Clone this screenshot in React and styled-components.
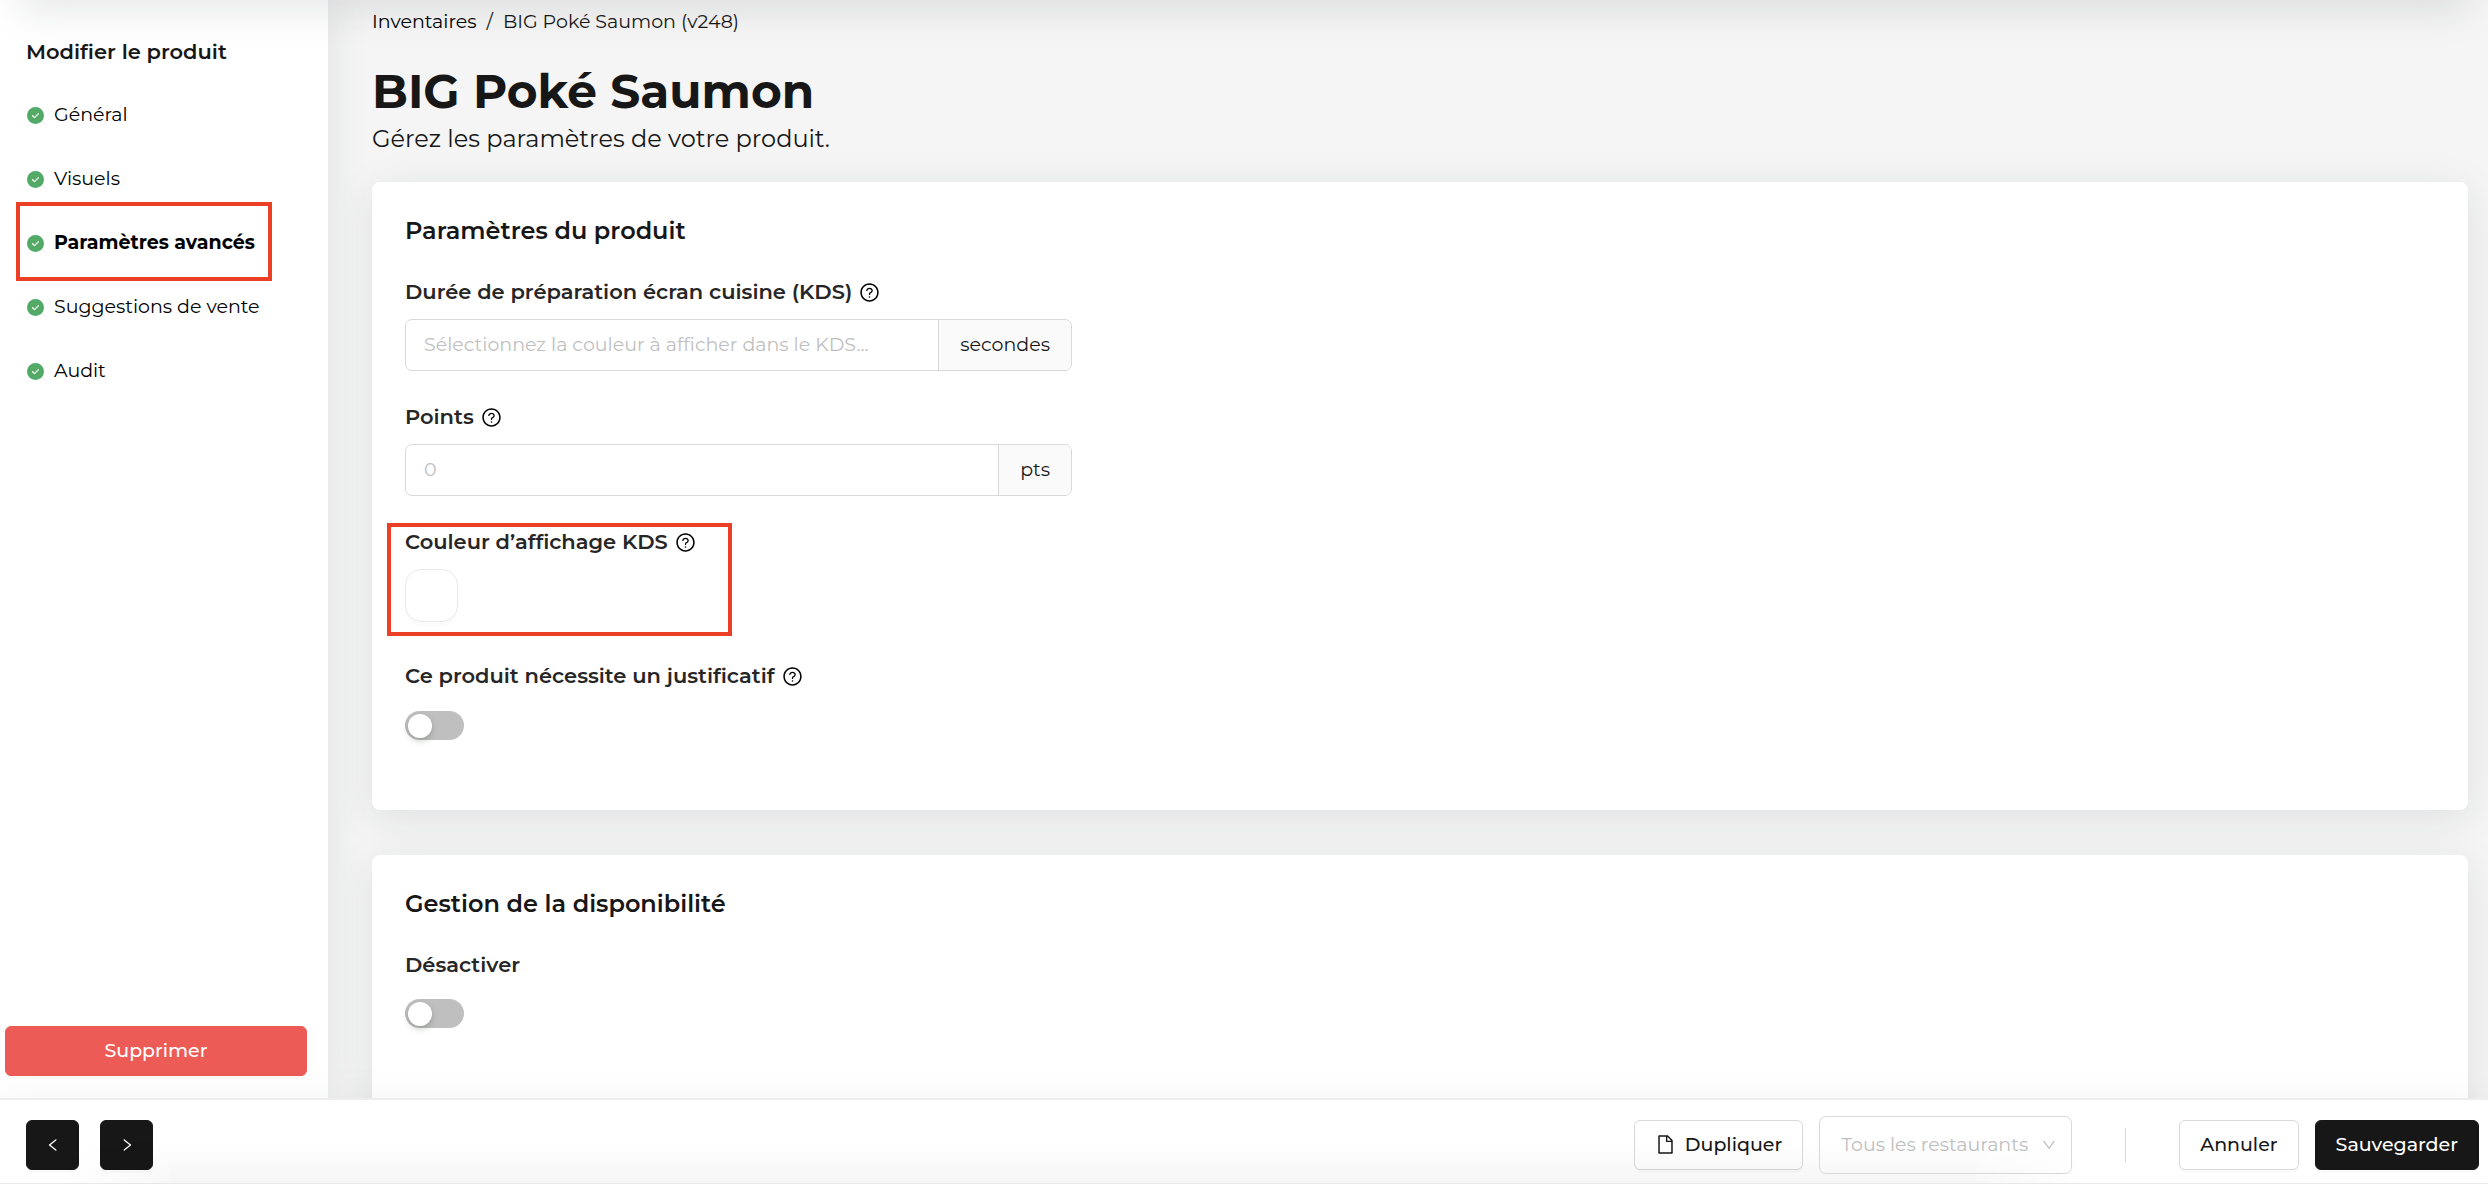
import React, { useState } from "react";
import styled, { createGlobalStyle, css } from "styled-components";
import {
  AiOutlineDown,
  AiOutlineFile,
  AiOutlineLeft,
  AiOutlineQuestionCircle,
  AiOutlineRight,
} from "react-icons/ai";

const colors = {
  text: "#171717",
  label: "#262626",
  muted: "#bfbfbf",
  border: "#d9d9d9",
  danger: "#ed5b56",
  success: "#52aa66",
  highlight: "#eb4025",
  page: "#f5f5f5",
};

const GlobalStyle = createGlobalStyle`
  * {
    box-sizing: border-box;
  }

  body {
    margin: 0;
    background: ${colors.page};
    color: ${colors.text};
    font-family: Montserrat, Inter, sans-serif;
    font-size: 19px;
    line-height: 28px;
  }

  button,
  input,
  select {
    font: inherit;
    color: inherit;
  }
`;

const highlightFrame = css`
  &::after {
    content: "";
    position: absolute;
    inset: ${(p) => p.$frame};
    border: 4px solid ${colors.highlight};
    pointer-events: none;
  }
`;

const Page = styled.div`
  display: flex;
  flex-direction: column;
  height: 100vh;
  overflow: hidden;
`;

/* bottom edge of the header, only its shadow falls on the page */
const HeaderEdge = styled.div`
  position: fixed;
  top: -40px;
  left: 20px;
  right: 20px;
  height: 40px;
  z-index: 3;
  box-shadow: 0 8px 40px rgba(30, 35, 50, 0.13);
`;

const Body = styled.div`
  display: flex;
  flex: 1;
  min-height: 0;
`;

const Sidebar = styled.aside`
  position: relative;
  z-index: 1;
  display: flex;
  flex-direction: column;
  justify-content: space-between;
  width: 328px;
  flex-shrink: 0;
  padding: 38px 21px 22px 5px;
  background: #fff;
  box-shadow: 0 0 40px rgba(30, 35, 50, 0.1);
`;

const SidebarTitle = styled.h2`
  margin: 0 0 31px;
  padding-left: 21px;
  font-size: 21px;
  font-weight: 600;
  line-height: 28px;
`;

const Menu = styled.ul`
  display: flex;
  flex-direction: column;
  gap: 28px;
  margin: 0;
  padding: 0 0 0 22px;
  list-style: none;
`;

const MenuItem = styled.li`
  position: relative;
  height: 36px;
  ${(p) => p.$frame && highlightFrame}
`;

const MenuLink = styled.a`
  display: flex;
  align-items: center;
  gap: 10px;
  height: 36px;
  color: #000;
  font-weight: ${(p) => (p.$active ? 700 : 400)};
  text-decoration: none;
  white-space: nowrap;
`;

const Button = styled.button`
  display: inline-flex;
  align-items: center;
  justify-content: center;
  gap: 9px;
  height: 50px;
  padding: 0 20px;
  border: 1px solid ${colors.border};
  border-radius: 6px;
  background: #fff;
  font-weight: 500;
  white-space: nowrap;
  cursor: pointer;
  box-shadow: 0 3px 0 rgba(0, 0, 0, 0.02);

  ${(p) =>
    p.$variant === "dark" &&
    css`
      border-color: ${colors.text};
      background: ${colors.text};
      color: #fff;
    `}

  ${(p) =>
    p.$variant === "danger" &&
    css`
      border-color: ${colors.danger};
      background: ${colors.danger};
      color: #fff;
    `}
`;

const ArrowButton = styled(Button)`
  width: 53px;
  padding: 0;
`;

const Main = styled.main`
  flex: 1;
  min-width: 0;
  padding: 8px 20px 0 44px;
  overflow: hidden;
`;

const Breadcrumb = styled.nav`
  display: flex;
  gap: 10px;

  a {
    color: #000;
    text-decoration: none;
  }
`;

const Title = styled.h1`
  margin: 24px 0 0;
  font-size: 47px;
  font-weight: 700;
  line-height: 64px;
`;

const Subtitle = styled.p`
  margin: 0 0 28px;
  font-size: 24px;
  line-height: 30px;
`;

const Card = styled.section`
  margin-bottom: 45px;
  padding: 33px 33px ${(p) => p.$bottom || "70px"};
  border-radius: 8px;
  background: #fff;
  box-shadow: 0 8px 40px rgba(30, 35, 50, 0.1);
`;

const CardTitle = styled.h2`
  margin: 0 0 31px;
  font-size: 24px;
  font-weight: 600;
  line-height: 32px;
`;

const Field = styled.div`
  position: relative;
  width: 667px;
  margin-bottom: ${(p) => p.$gap || "32px"};
  ${(p) => p.$frame && highlightFrame}

  &:last-child {
    margin-bottom: 0;
  }
`;

const FieldHead = styled.div`
  display: flex;
  align-items: center;
  gap: 7px;
  height: 28px;
  margin-bottom: ${(p) => p.$gap || "13px"};
  font-size: 21px;
  font-weight: 600;
  color: ${colors.label};
  white-space: nowrap;
`;

const HelpIcon = styled(AiOutlineQuestionCircle)`
  width: 21px;
  height: 21px;
  color: #000;
`;

const InputGroup = styled.div`
  display: flex;
  height: 52px;
  border: 1px solid ${colors.border};
  border-radius: 7px;
  overflow: hidden;
`;

const Input = styled.input`
  flex: 1;
  min-width: 0;
  padding: 0 18px;
  border: 0;
  outline: none;
  background: transparent;

  &::placeholder {
    color: ${colors.muted};
    opacity: 1;
  }
`;

const Addon = styled.span`
  display: flex;
  align-items: center;
  padding: 0 21px;
  border-left: 1px solid ${colors.border};
  background: #fafafa;
`;

const Swatch = styled.button`
  display: block;
  width: 53px;
  height: 53px;
  border: 1px solid #e8e8e8;
  border-radius: 16px;
  background: #fff;
  box-shadow: 0 6px 0 -1px rgba(0, 0, 0, 0.01);
  cursor: pointer;
`;

const Switch = styled.input`
  appearance: none;
  display: block;
  width: 59px;
  height: 29px;
  margin: 0;
  padding: 3px;
  border-radius: 15px;
  background: ${(p) => (p.checked ? colors.text : colors.muted)};
  cursor: pointer;

  &::before {
    content: "";
    display: block;
    width: 24px;
    height: 24px;
    margin-left: ${(p) => (p.checked ? "29px" : "0")};
    border-radius: 50%;
    background: #fff;
    box-shadow: 0 3px 6px rgba(0, 35, 11, 0.2);
  }
`;

const Footer = styled.footer`
  position: relative;
  z-index: 2;
  display: flex;
  align-items: center;
  justify-content: space-between;
  height: 86px;
  flex-shrink: 0;
  padding: 6px 9px 0 26px;
  border-top: 2px solid #eee;
  border-bottom: 1px solid #e8e8e8;
  background: #fff;
  box-shadow: 0 0 40px rgba(0, 0, 0, 0.05);

  /* soft shade rising from below the window, it stops before the save buttons */
  &::before {
    content: "";
    position: absolute;
    inset: 40px 400px 0 60px;
    background: linear-gradient(transparent, rgba(0, 0, 0, 0.035));
    mask-image: linear-gradient(
      90deg,
      transparent,
      #000 120px,
      #000 calc(100% - 120px),
      transparent
    );
    pointer-events: none;
  }
`;

const FooterGroup = styled.div`
  display: flex;
  align-items: center;
  gap: ${(p) => p.$gap || "16px"};
`;

const Divider = styled.span`
  width: 1px;
  height: 34px;
  margin: 0 37px;
  background: ${colors.border};
`;

const SelectBox = styled.div`
  position: relative;
  width: 253px;

  svg {
    position: absolute;
    top: 21px;
    right: 15px;
    color: ${colors.muted};
    pointer-events: none;
  }
`;

const Select = styled.select`
  appearance: none;
  display: block;
  width: 100%;
  height: 58px;
  padding: 0 38px 0 21px;
  border: 1px solid ${colors.border};
  border-radius: 7px;
  background: transparent;
  color: ${colors.muted};
`;

function CheckIcon() {
  return (
    <svg width="17" height="17" viewBox="0 0 17 17" aria-hidden="true">
      <circle cx="8.5" cy="8.5" r="8.5" fill={colors.success} />
      <path
        d="M5.5 8.7l2 1.9 4-4"
        fill="none"
        stroke="#fff"
        strokeWidth="1.2"
        strokeLinecap="round"
        strokeLinejoin="round"
      />
    </svg>
  );
}

const menu = [
  { label: "Général" },
  { label: "Visuels" },
  { label: "Paramètres avancés", active: true },
  { label: "Suggestions de vente" },
  { label: "Audit" },
];

function App() {
  const [duration, setDuration] = useState("");
  const [points, setPoints] = useState("");
  const [proof, setProof] = useState(false);
  const [disabled, setDisabled] = useState(false);

  return (
    <>
      <GlobalStyle />
      <Page>
        <HeaderEdge />
        <Body>
          <Sidebar>
            <div>
              <SidebarTitle>Modifier le produit</SidebarTitle>
              <Menu>
                {menu.map((item) => (
                  <MenuItem
                    key={item.label}
                    $frame={item.active && "-23px 35px -20px -11px"}
                  >
                    <MenuLink href="#" $active={item.active}>
                      <CheckIcon />
                      {item.label}
                    </MenuLink>
                  </MenuItem>
                ))}
              </Menu>
            </div>
            <Button type="button" $variant="danger">
              Supprimer
            </Button>
          </Sidebar>

          <Main>
            <Breadcrumb>
              <a href="#">Inventaires</a>
              <span>/</span>
              <span>BIG Poké Saumon (v248)</span>
            </Breadcrumb>
            <Title>BIG Poké Saumon</Title>
            <Subtitle>Gérez les paramètres de votre produit.</Subtitle>

            <Card>
              <CardTitle>Paramètres du produit</CardTitle>
              <Field>
                <FieldHead>
                  <label htmlFor="duration">
                    Durée de préparation écran cuisine (KDS)
                  </label>
                  <HelpIcon />
                </FieldHead>
                <InputGroup>
                  <Input
                    id="duration"
                    placeholder="Sélectionnez la couleur à afficher dans le KDS..."
                    value={duration}
                    onChange={(e) => setDuration(e.target.value)}
                  />
                  <Addon>secondes</Addon>
                </InputGroup>
              </Field>
              <Field>
                <FieldHead>
                  <label htmlFor="points">Points</label>
                  <HelpIcon />
                </FieldHead>
                <InputGroup>
                  <Input
                    id="points"
                    placeholder="0"
                    value={points}
                    onChange={(e) => setPoints(e.target.value)}
                  />
                  <Addon>pts</Addon>
                </InputGroup>
              </Field>
              <Field $gap="40px" $frame="-5px 340px -14px -18px">
                <FieldHead>
                  <label htmlFor="color">Couleur d’affichage KDS</label>
                  <HelpIcon />
                </FieldHead>
                <Swatch id="color" type="button" />
              </Field>
              <Field>
                <FieldHead $gap="21px">
                  <label htmlFor="proof">
                    Ce produit nécessite un justificatif
                  </label>
                  <HelpIcon />
                </FieldHead>
                <Switch
                  id="proof"
                  type="checkbox"
                  checked={proof}
                  onChange={(e) => setProof(e.target.checked)}
                />
              </Field>
            </Card>

            <Card $bottom="120px">
              <CardTitle>Gestion de la disponibilité</CardTitle>
              <Field>
                <FieldHead $gap="20px">
                  <label htmlFor="disabled">Désactiver</label>
                </FieldHead>
                <Switch
                  id="disabled"
                  type="checkbox"
                  checked={disabled}
                  onChange={(e) => setDisabled(e.target.checked)}
                />
              </Field>
            </Card>
          </Main>
        </Body>

        <Footer>
          <FooterGroup $gap="21px">
            <ArrowButton type="button" $variant="dark" aria-label="Précédent">
              <AiOutlineLeft size={16} />
            </ArrowButton>
            <ArrowButton type="button" $variant="dark" aria-label="Suivant">
              <AiOutlineRight size={16} />
            </ArrowButton>
          </FooterGroup>
          <FooterGroup>
            <Button type="button">
              <AiOutlineFile size={21} />
              Dupliquer
            </Button>
            <SelectBox>
              <Select aria-label="Restaurants">
                <option>Tous les restaurants</option>
              </Select>
              <AiOutlineDown size={16} />
            </SelectBox>
            <Divider />
            <Button type="button">Annuler</Button>
            <Button type="button" $variant="dark">
              Sauvegarder
            </Button>
          </FooterGroup>
        </Footer>
      </Page>
    </>
  );
}

export default App;
